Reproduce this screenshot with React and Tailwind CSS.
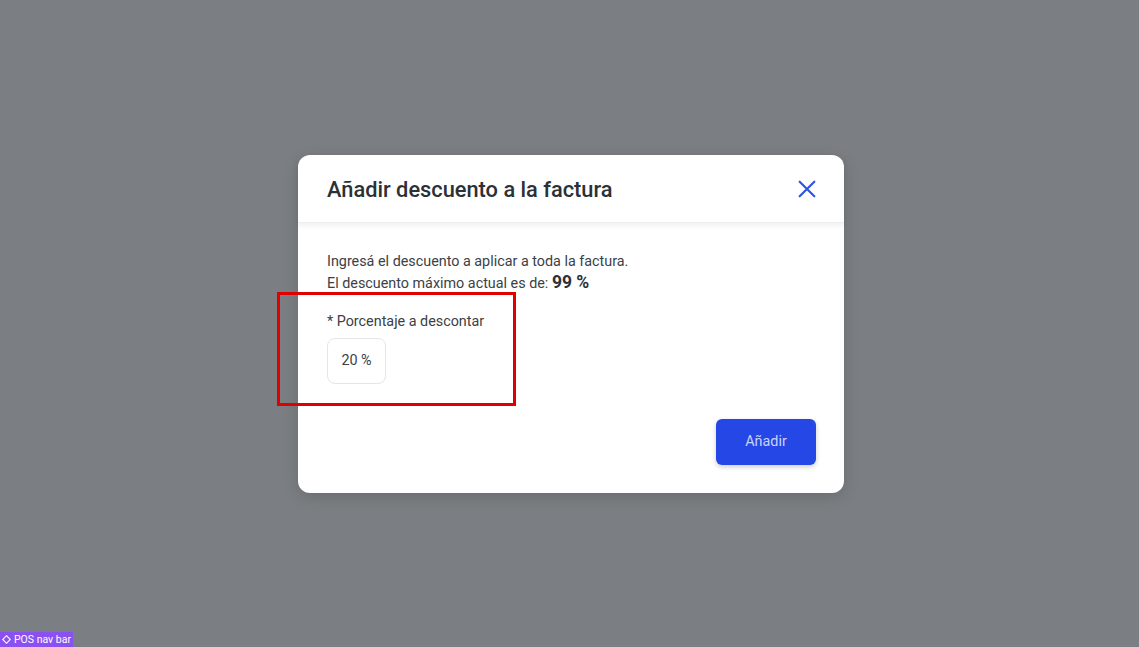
import React from "react";

export default function App() {
  return (
    <div className="relative w-[1139px] h-[647px] bg-[#7b7f83] overflow-hidden" style={{ fontFamily: "Roboto, 'Liberation Sans', sans-serif" }}>
      <div className="absolute left-[298px] top-[155px] w-[546px] h-[338px] bg-white rounded-[12px] shadow-[0_4px_16px_rgba(0,0,0,0.15)] flex flex-col">
        <div className="h-[68px] flex items-center justify-between pl-[29px] pr-[26px] shadow-[0_3px_5px_rgba(0,0,0,0.06)] border-b border-[#eceef0]">
          <h2 className="text-[21.8px] font-medium text-[#2b3136] pt-[3px]">Añadir descuento a la factura</h2>
          <svg width="22" height="22" viewBox="0 0 24 24" fill="none" stroke="#2f55e4" strokeWidth="2.4" strokeLinecap="round">
            <path d="M4 4L20 20M20 4L4 20" />
          </svg>
        </div>
        <div className="flex-1 flex flex-col pl-[29px] pr-[28px] pt-[28px] pb-[28px]">
          <p className="text-[14.35px] leading-[21px] text-[#3b4146]">Ingresá el descuento a aplicar a toda la factura.</p>
          <p className="text-[14.35px] leading-[21px] text-[#3b4146]">
            El descuento máximo actual es de: <span className="text-[17.5px] font-bold text-[#2b3136]">99 %</span>
          </p>
          <label className="mt-[18px] text-[14.35px] leading-[20px] text-[#3b4146]">* Porcentaje a descontar</label>
          <div className="mt-[6px] w-[59px] h-[46px] rounded-[8px] border border-[#e4e6e8] flex items-center justify-center text-[14.35px] text-[#3b4146]">20 %</div>
          <div className="flex-1 flex items-end justify-end">
            <button className="w-[100px] h-[46px] rounded-[6px] bg-[#2447e6] text-[#c9d3fb] text-[14.35px] shadow-[0_2px_5px_rgba(0,0,0,0.2)]">Añadir</button>
          </div>
        </div>
      </div>
      <div className="absolute left-[277px] top-[292px] w-[239px] h-[114px] border-[3px] border-[#e00000]"></div>
      <div className="absolute left-0 bottom-0 h-[15px] px-[2px] bg-[#8b50f0] text-white text-[10.5px] leading-[15px] flex items-center gap-[3px]">
        <svg width="9" height="9" viewBox="0 0 10 10" fill="none" stroke="white" strokeWidth="1.2"><path d="M5 0.8L9.2 5L5 9.2L0.8 5Z" /></svg>
        <span>POS nav bar</span>
      </div>
    </div>
  );
}
